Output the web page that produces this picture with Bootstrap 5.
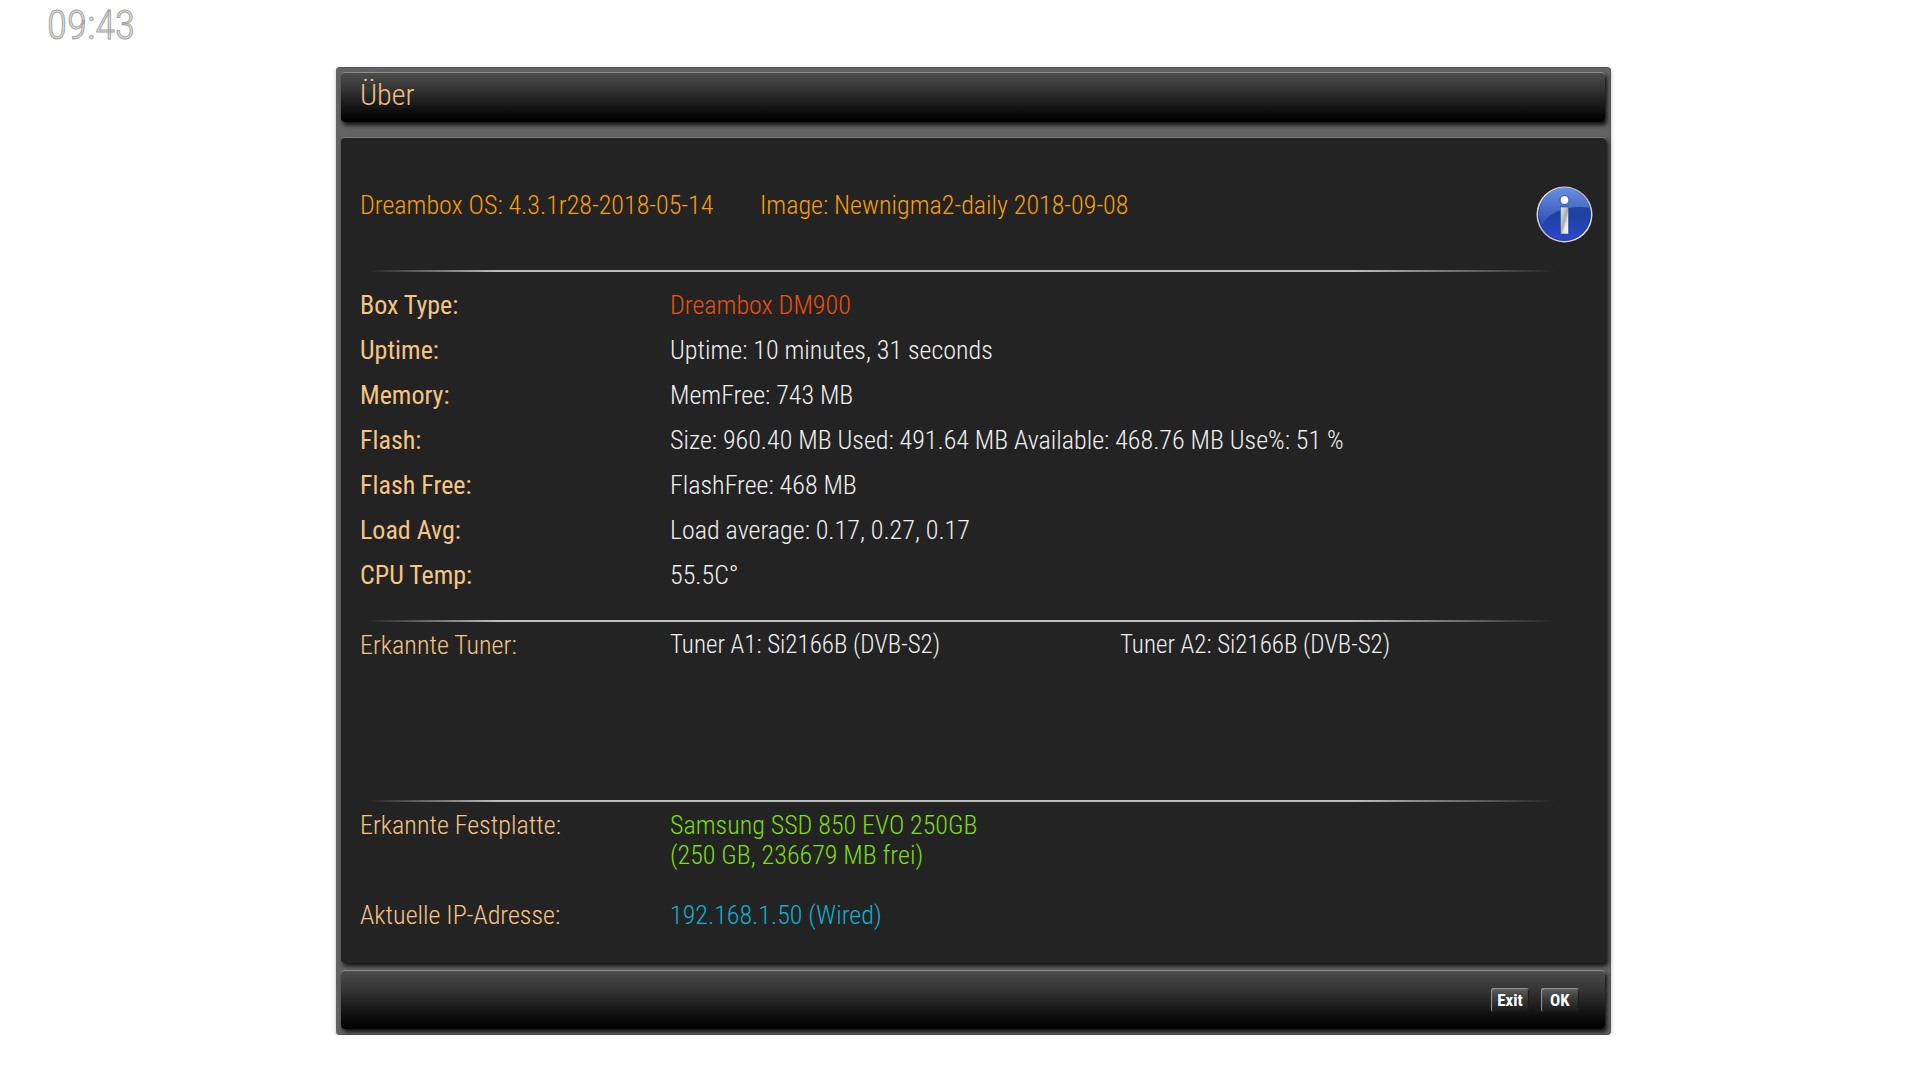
<!DOCTYPE html>
<html lang="de">
<head>
<meta charset="utf-8">
<meta name="viewport" content="width=device-width, initial-scale=1">
<title>Über</title>
<link href="https://cdn.jsdelivr.net/npm/bootstrap@5.3.0/dist/css/bootstrap.min.css" rel="stylesheet">
<style>
  body { background: #fff; font-family: "Roboto Condensed", Roboto, sans-serif; font-weight: 300; font-size: 26px; line-height: 30px; color: #f0f0f0; }
  .clock { padding: 1px 47px 0; font-size: 41px; line-height: 48px; color: #e2e2e2; -webkit-text-stroke: 1px #a6a6a6; }
  .screen { margin: 18px 16.1% 0 17.5%; padding: 4px 4px 5px 5px; border-radius: 4px; background: #636363; border: 1px solid #555; border-width: 1px 1px 1px 0; box-shadow: 0 2px 4px rgba(0,0,0,.25); }
  .bar { border-radius: 4px; border-top: 1px solid #8d8d8d; background: linear-gradient(#4c4c4c, #323232 35%, #101010 75%, #000); box-shadow: 2px 3px 4px rgba(0,0,0,.85); }
  .title-bar { height: 50px; margin-right: 1px; padding: 4px 19px; font-size: 30px; line-height: 35px; color: #f0bf80; }
  .title-bar h1 { font: inherit; margin: 0; }
  .panel { margin: 15px 0 0; padding: 48px 0 33px; border-radius: 4px; border-top: 1px solid #7c7c7c; background: #232323; box-shadow: 2px 3px 4px rgba(0,0,0,.85); }
  .panel-head { padding: 0 13px 0 19px; height: 84px; color: #fa9f00; }
  .panel-head .versions { padding-top: 4px; }
  .panel-head .versions span { min-width: 400px; }
  .rule { height: 2px; margin: 0 50px 0 26px; background: linear-gradient(90deg, transparent, #bdbdbd 11%, #bdbdbd 83%, transparent); }
  .facts { padding: 0 19px; margin: 0; }
  .facts dt { flex: 0 0 310px; font-weight: 300; color: #f6c583; }
  .facts dd { margin: 0; }
  .system { padding-top: 11px; padding-bottom: 22px; line-height: 45px; }
  .system dt { font-weight: 400; }
  .tuners { padding-top: 8px; min-height: 178px; }
  .tuners dd { flex: 0 0 450px; font-size: 25px; }
  .storage { padding-top: 8px; gap: 30px; }
  .model { color: #ec500a; }
  .disk { color: #7cde0c; }
  .address { color: #12aed0; }
  .foot-bar { margin: 7px 1px 0 0; height: 59px; padding: 0 26px 0 0; gap: 12px; }
  .key { width: 38px; height: 24px; padding: 0; border: 0; border-radius: 3px; font-family: "Liberation Sans Narrow", "Roboto Condensed", "Liberation Sans", sans-serif; font-size: 17px; line-height: 24px; font-weight: 700; color: #fff; background: linear-gradient(#606060, #3a3a3a 45%, #191919); box-shadow: inset 1px 1px 1px #999, inset -1px -1px 1px #1a1a1a; }
</style>
</head>
<body>
<time class="clock d-block" datetime="09:43">09:43</time>
<main class="screen">
  <header class="bar title-bar"><h1>Über</h1></header>
  <section class="panel">
    <div class="panel-head d-flex justify-content-between align-items-start">
      <div class="versions d-flex"><span>Dreambox OS: 4.3.1r28-2018-05-14</span><span>Image: Newnigma2-daily 2018-09-08</span></div>
      <svg width="57" height="57" viewBox="0 0 57 57" role="img" aria-label="Info">
        <defs>
          <linearGradient id="ring" x1="0" y1="0" x2="1" y2="1"><stop offset="0" stop-color="#fff"/><stop offset=".5" stop-color="#b5b5b5"/><stop offset="1" stop-color="#f4f4f4"/></linearGradient>
          <linearGradient id="ball" x1="0" y1="0" x2="0" y2="1"><stop offset="0" stop-color="#2449a8"/><stop offset=".5" stop-color="#1f41a0"/><stop offset="1" stop-color="#2b48cc"/></linearGradient>
          <linearGradient id="gloss" x1="0" y1="0" x2="0" y2="1"><stop offset="0" stop-color="#6a8fe0"/><stop offset="1" stop-color="#2c50b0"/></linearGradient>
          <linearGradient id="stem" x1="0" y1="0" x2="1" y2="1"><stop offset="0" stop-color="#eee"/><stop offset=".5" stop-color="#aaa"/><stop offset=".65" stop-color="#e4e4e4"/><stop offset="1" stop-color="#fff"/></linearGradient>
        </defs>
        <circle cx="28.500" cy="28.500" r="28" fill="url(#ring)"/>
        <circle cx="28.500" cy="28.500" r="26" fill="url(#ball)" stroke="#1637ac"/>
        <path d="M6 39A25.500 25.500 0 1 1 53.500 22C36 19 15 23 6 39Z" fill="url(#gloss)"/>
        <circle cx="28.500" cy="14" r="4.500" fill="#fff" stroke="#2a4fae"/>
        <rect x="24.500" y="21" width="8" height="27" fill="url(#stem)" stroke="#2a4fae" stroke-width=".6"/>
      </svg>
    </div>
    <div class="rule"></div>
    <dl class="facts system">
      <div class="d-flex"><dt>Box Type:</dt><dd class="model">Dreambox DM900</dd></div>
      <div class="d-flex"><dt>Uptime:</dt><dd>Uptime: 10 minutes, 31 seconds</dd></div>
      <div class="d-flex"><dt>Memory:</dt><dd>MemFree: 743 MB</dd></div>
      <div class="d-flex"><dt>Flash:</dt><dd>Size: 960.40 MB Used: 491.64 MB Available: 468.76 MB Use%: 51 %</dd></div>
      <div class="d-flex"><dt>Flash Free:</dt><dd>FlashFree: 468 MB</dd></div>
      <div class="d-flex"><dt>Load Avg:</dt><dd>Load average: 0.17, 0.27, 0.17</dd></div>
      <div class="d-flex"><dt>CPU Temp:</dt><dd>55.5C°</dd></div>
    </dl>
    <div class="rule"></div>
    <dl class="facts tuners d-flex"><dt>Erkannte Tuner:</dt><dd>Tuner A1: Si2166B (DVB-S2)</dd><dd>Tuner A2: Si2166B (DVB-S2)</dd></dl>
    <div class="rule"></div>
    <dl class="facts storage d-flex flex-column">
      <div class="d-flex"><dt>Erkannte Festplatte:</dt><dd class="disk">Samsung SSD 850 EVO 250GB<br>(250 GB, 236679 MB frei)</dd></div>
      <div class="d-flex"><dt>Aktuelle IP-Adresse:</dt><dd class="address">192.168.1.50 (Wired)</dd></div>
    </dl>
  </section>
  <footer class="bar foot-bar d-flex justify-content-end align-items-center">
    <button type="button" class="key">Exit</button>
    <button type="button" class="key">OK</button>
  </footer>
</main>
<script src="https://cdn.jsdelivr.net/npm/bootstrap@5.3.0/dist/js/bootstrap.bundle.min.js"></script>
</body>
</html>
